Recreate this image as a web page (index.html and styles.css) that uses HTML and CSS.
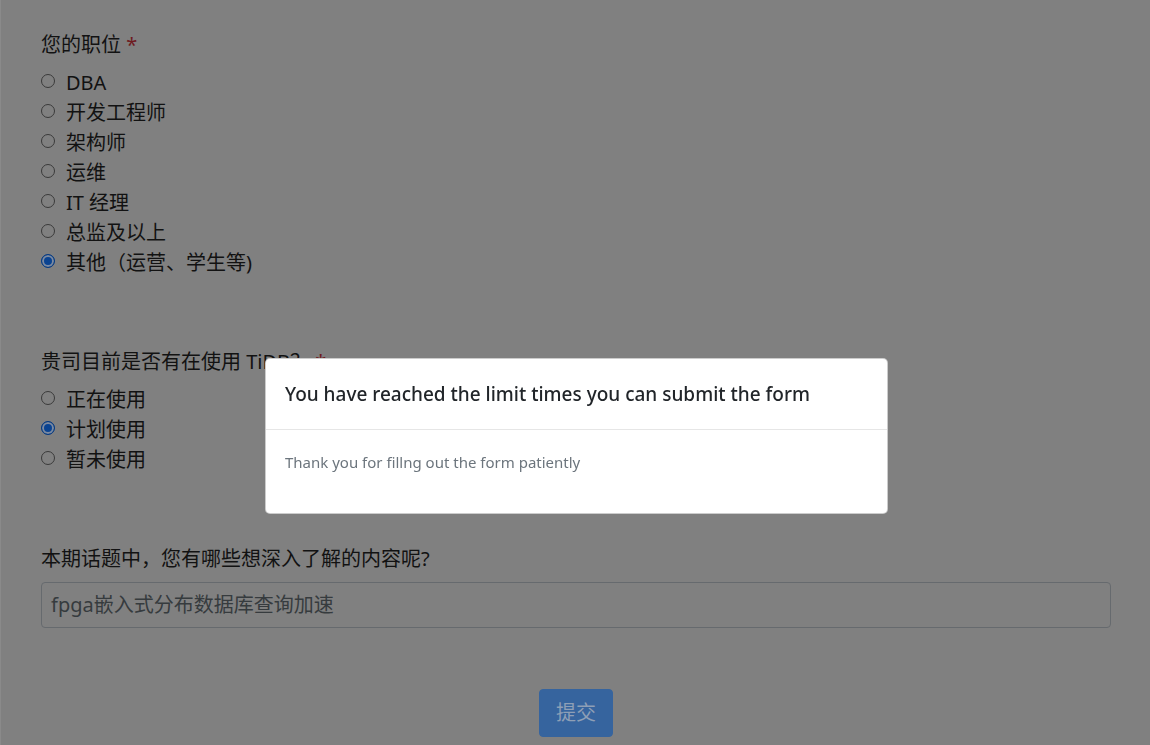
FILE: index.html
```html
<!DOCTYPE html>
<html lang="zh-CN">
<head>
  <meta charset="UTF-8" />
  <meta name="viewport" content="width=device-width, initial-scale=1.0" />
  <title>TiDB 调研问卷</title>
  <link rel="stylesheet" href="styles.css">
</head>
<body class="modal-open">

  <main class="survey">

    <!-- Q1 -->
    <section class="question">
      <p class="q-label">您的职位 <span class="req">*</span></p>
      <label class="option"><span class="radio"></span>DBA</label>
      <label class="option"><span class="radio"></span>开发工程师</label>
      <label class="option"><span class="radio"></span>架构师</label>
      <label class="option"><span class="radio"></span>运维</label>
      <label class="option"><span class="radio"></span>IT 经理</label>
      <label class="option"><span class="radio"></span>总监及以上</label>
      <label class="option"><span class="radio checked"></span>其他（运营、学生等)</label>
    </section>

    <!-- Q2 -->
    <section class="question">
      <p class="q-label">贵司目前是否有在使用 TiDB？ <span class="req">*</span></p>
      <label class="option"><span class="radio"></span>正在使用</label>
      <label class="option"><span class="radio checked"></span>计划使用</label>
      <label class="option"><span class="radio"></span>暂未使用</label>
    </section>

    <!-- Q3 -->
    <section class="question">
      <p class="q-label">本期话题中，您有哪些想深入了解的内容呢?</p>
      <div class="text-input">fpga嵌入式分布数据库查询加速</div>
    </section>

    <div class="actions">
      <button class="btn-submit">提交</button>
    </div>

  </main>

  <!-- Limit modal -->
  <div class="modal">
    <div class="modal-dialog">
      <div class="modal-header">
        <h5>You have reached the limit times you can submit the form</h5>
      </div>
      <div class="modal-body">
        <p>Thank you for fillng out the form patiently</p>
      </div>
    </div>
  </div>

</body>
</html>
```

FILE: styles.css
```css
/* --- RESET & BASE --- */
* { margin: 0; padding: 0; box-sizing: border-box; }
body {
  background: #808080;
  color: #121212;
  font-family: 'Noto Sans', 'Noto Sans CJK SC', sans-serif;
  font-size: 20px;
  line-height: 30px;
  overflow: hidden;
  height: 745px;
  border-left: 1px solid #8a8a8a;
}

/* page sits dimmed behind the modal */
.survey {
  padding: 30px 39px 0 40px;
}
.question {
  margin-bottom: 69px;
}
.question:nth-child(3) {
  margin-bottom: 61px;
}
.q-label {
  margin-bottom: 8px;
}
.req {
  color: #6e1a1f;
}

.option {
  display: flex;
  align-items: center;
  gap: 11px;
}
.radio {
  width: 14px;
  height: 14px;
  border: 1px solid #3a3a3a;
  border-radius: 50%;
  margin-top: -4px;
  flex-shrink: 0;
}
.radio.checked {
  border-color: #063a80;
  background: #0a4391;
  box-shadow: inset 0 0 0 2px #7c8aa0;
}

.text-input {
  border: 1px solid #666a6e;
  border-radius: 4px;
  padding: 7px 9px;
  color: #363b3e;
}

.actions {
  display: flex;
  justify-content: center;
}
.btn-submit {
  font: inherit;
  background: #36649e;
  color: #8e9fb6;
  border: 1px solid #36649e;
  border-radius: 4px;
  padding: 8px 16px;
  cursor: pointer;
}

/* --- MODAL --- */
.modal {
  position: fixed;
  inset: 0;
}
.modal-dialog {
  position: absolute;
  left: 265px;
  top: 358px;
  width: 623px;
  background: #fff;
  border: 1px solid rgba(0,0,0,0.2);
  border-radius: 5px;
  overflow: hidden;
}
.modal-header {
  padding: 20px 19px 19px;
  border-bottom: 1px solid #e6e6e6;
}
.modal-header h5 {
  font-size: 19px;
  font-weight: 500;
  color: #212529;
  line-height: 31px;
}
.modal-body {
  padding: 21px 19px 40px;
}
.modal-body p {
  font-size: 15px;
  line-height: 22px;
  color: #6c757d;
}
```
